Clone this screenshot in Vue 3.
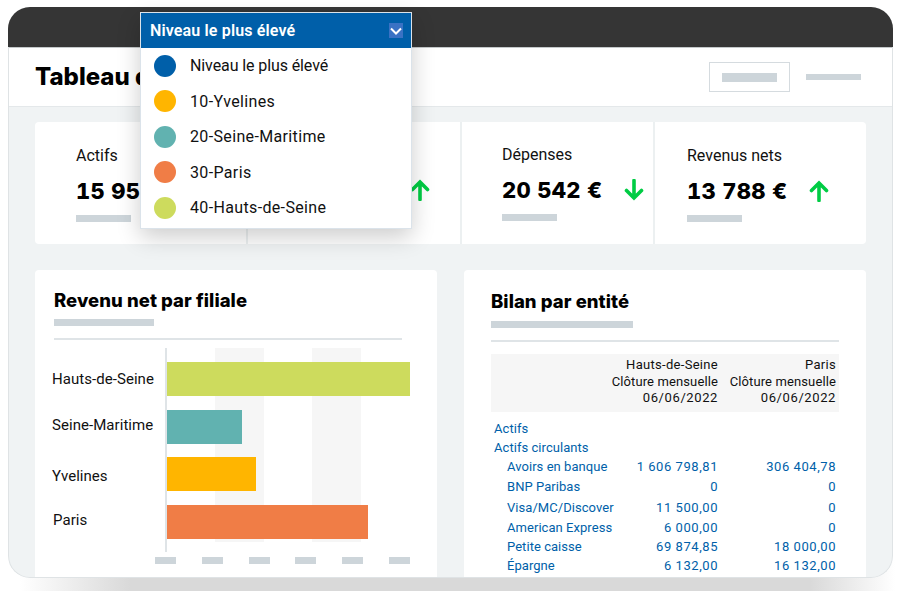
<script setup>
const levels = [
  { name: 'Niveau le plus élevé', color: '#005fa9' },
  { name: '10-Yvelines', color: '#ffb500' },
  { name: '20-Seine-Maritime', color: '#61b2b0' },
  { name: '30-Paris', color: '#f07d46' },
  { name: '40-Hauts-de-Seine', color: '#cddb5d' },
]

const bars = [
  { name: 'Hauts-de-Seine', width: 243, color: '#cddb5d', cls: 'lab-a' },
  { name: 'Seine-Maritime', width: 75, color: '#61b2b0', cls: 'lab-b' },
  { name: 'Yvelines', width: 89, color: '#ffb500', cls: 'lab-c' },
  { name: 'Paris', width: 201, color: '#f07d46', cls: 'lab-d' },
]

const rows = [
  { name: 'Actifs', cls: 'h19' },
  { name: 'Actifs circulants', cls: 'h19' },
  { name: 'Avoirs en banque', a: '1 606 798,81', b: '306 404,78', sub: true, cls: 'h19' },
  { name: 'BNP Paribas', a: '0', b: '0', sub: true, cls: 'h21' },
  { name: 'Visa/MC/Discover', a: '11 500,00', b: '0', sub: true, cls: 'h20' },
  { name: 'American Express', a: '6 000,00', b: '0', sub: true, cls: 'h20' },
  { name: 'Petite caisse', a: '69 874,85', b: '18 000,00', sub: true, cls: 'h19' },
  { name: 'Épargne', a: '6 132,00', b: '16 132,00', sub: true, cls: 'h19' },
]
</script>

<template>
  <div class="page">
    <div class="under-shadow"></div>
    <div class="window">
      <div class="topbar"></div>
      <header class="header">
        <h1 class="page-title">Tableau de bord</h1>
        <div class="header-actions">
          <div class="ghost-btn"><span class="sk sk-btn"></span></div>
          <span class="sk sk-link"></span>
        </div>
      </header>

      <main class="content">
        <section class="kpis">
          <div class="kpi kpi-1">
            <div class="kpi-label">Actifs</div>
            <div class="kpi-value-row"><span class="kpi-value">15 956 €</span></div>
            <span class="sk sk-kpi"></span>
          </div>
          <div class="kpi kpi-2">
            <svg class="arrow" viewBox="0 0 20 22"><path d="M10 20.500V3M2.500 10.500L10 3l7.500 7.500" /></svg>
          </div>
          <div class="kpi kpi-3">
            <div class="kpi-label">Dépenses</div>
            <div class="kpi-value-row">
              <span class="kpi-value">20 542 €</span>
              <svg class="arrow" viewBox="0 0 20 22"><path d="M10 1.500V19M2.500 11.500L10 19l7.500-7.500" /></svg>
            </div>
            <span class="sk sk-kpi"></span>
          </div>
          <div class="kpi kpi-4">
            <div class="kpi-label">Revenus nets</div>
            <div class="kpi-value-row">
              <span class="kpi-value">13 788 €</span>
              <svg class="arrow" viewBox="0 0 20 22"><path d="M10 20.500V3M2.500 10.500L10 3l7.500 7.500" /></svg>
            </div>
            <span class="sk sk-kpi"></span>
          </div>
        </section>

        <section class="cards">
          <div class="card chart-card">
            <h2 class="card-title">Revenu net par filiale</h2>
            <span class="sk sk-sub-a"></span>
            <div class="rule"></div>
            <div class="chart">
              <div class="bands"><span></span><span></span></div>
              <div class="chart-rows">
                <div v-for="b in bars" :key="b.name" class="chart-row">
                  <span class="chart-label" :class="b.cls">{{ b.name }}</span>
                  <span class="bar" :style="{ width: b.width + 'px', background: b.color }"></span>
                </div>
              </div>
            </div>
            <div class="ticks"><span v-for="n in 6" :key="n" class="sk tick"></span></div>
          </div>

          <div class="card table-card">
            <h2 class="card-title">Bilan par entité</h2>
            <span class="sk sk-sub-b"></span>
            <div class="rule"></div>
            <table class="bilan">
              <thead>
                <tr>
                  <th></th>
                  <th>
                    <span class="t-name">Hauts-de-Seine</span><br />
                    <span class="t-close">Clôture mensuelle</span><br />
                    <span class="t-date">06/06/2022</span>
                  </th>
                  <th>
                    <span class="t-name">Paris</span><br />
                    <span class="t-close">Clôture mensuelle</span><br />
                    <span class="t-date">06/06/2022</span>
                  </th>
                </tr>
              </thead>
              <tbody>
                <tr v-for="r in rows" :key="r.name" :class="r.cls">
                  <td class="name" :class="{ sub: r.sub }">{{ r.name }}</td>
                  <td class="num">{{ r.a }}</td>
                  <td class="num">{{ r.b }}</td>
                </tr>
              </tbody>
            </table>
          </div>
        </section>
      </main>
      <div class="window-edge"></div>
    </div>

    <div class="dropdown">
      <div class="dd-head">
        <span>Niveau le plus élevé</span>
        <span class="dd-chevron">
          <svg viewBox="0 0 14 15"><path d="M2 5.500l5 5 5-5" /></svg>
        </span>
      </div>
      <ul class="dd-list">
        <li v-for="l in levels" :key="l.name" class="dd-item">
          <span class="dot" :style="{ background: l.color }"></span>
          {{ l.name }}
        </li>
      </ul>
    </div>
  </div>
</template>

<style>
html, body { margin: 0; background: #fff; }
</style>

<style scoped>
.page {
  position: relative;
  width: 900px;
  height: 591px;
  overflow: hidden;
  background: #fff;
  font-family: Roboto, "Liberation Sans", sans-serif;
  color: #111;
  padding: 7px 7px 0 8px;
  box-sizing: border-box;
}
.under-shadow {
  position: absolute;
  left: 20px;
  right: 5px;
  top: 560px;
  bottom: 0;
  background: linear-gradient(90deg, rgba(217,217,217,0) 0, #d9d9d9 110px, #d9d9d9 790px, rgba(217,217,217,0) 100%);
}
.window {
  position: relative;
  height: 571px;
  border-radius: 22px;
  overflow: hidden;
  background: #f0f3f4;
  display: flex;
  flex-direction: column;
}
/* thin frame drawn over the page area, the dark bar runs edge to edge */
.window-edge {
  position: absolute;
  inset: 40px 0 0;
  border: 1px solid #dfe3e5;
  border-top: 0;
  border-radius: 0 0 22px 22px;
  pointer-events: none;
}
.topbar {
  height: 41px;
  flex: none;
  box-sizing: border-box;
  background: #353535;
  border-bottom: 1px solid #c4c8ca;
}
.header {
  height: 59px;
  flex: none;
  display: flex;
  align-items: center;
  justify-content: space-between;
  background: #fff;
  border-bottom: 1px solid #e4e8ea;
  padding: 0 32px 0 27px;
  box-sizing: border-box;
}
.page-title {
  margin: 0 0 2px;
  font-family: Inter, sans-serif;
  font-size: 24px;
  font-weight: 800;
  color: #000;
}
.header-actions {
  display: flex;
  align-items: center;
  gap: 16px;
}
.ghost-btn {
  width: 81px;
  height: 30px;
  border: 1px solid #d5dbdf;
  box-sizing: border-box;
  display: flex;
  align-items: center;
  justify-content: center;
}
.sk { display: block; background: #cdd5da; }
.sk-btn { width: 55px; height: 9px; }
.sk-link { width: 55px; height: 6px; }

.content {
  padding: 15px 27px 0;
  display: flex;
  flex-direction: column;
  gap: 26px;
}
.kpis {
  height: 122px;
  flex: none;
  display: flex;
  background: #fff;
  border-radius: 4px;
}
.kpi {
  box-sizing: border-box;
  padding: 24px 0 0 41px;
  border-right: 2px solid #ecf0f1;
}
.kpi-1 { width: 213px; }
.kpi-2 { width: 214px; padding: 57px 0 0 162px; }
.kpi-3 { width: 193px; padding: 23px 0 0 40px; }
.kpi-4 { flex: 1; border-right: 0; padding-left: 32px; }
.kpi-label { font-size: 16px; line-height: 20px; }
.kpi-value-row {
  display: flex;
  align-items: center;
  gap: 22px;
  height: 30px;
  margin-top: 10px;
}
.kpi-value {
  font-family: Inter, sans-serif;
  font-size: 22px;
  font-weight: 800;
  font-variant-numeric: tabular-nums;
  letter-spacing: .3px;
  color: #000;
  white-space: nowrap;
}
.arrow {
  width: 20px;
  height: 22px;
  fill: none;
  stroke: #00cc44;
  stroke-width: 3.600;
  stroke-linecap: round;
}
.sk-kpi { width: 55px; height: 7px; margin-top: 9px; }

.cards {
  display: flex;
  gap: 27px;
}
.card {
  width: 402px;
  height: 320px;
  flex: none;
  background: #fff;
  border-radius: 4px;
  box-sizing: border-box;
}
.chart-card { padding: 19px 35px 0 19px; }
.table-card { padding: 20px 27px 0; }
.card-title {
  margin: 0;
  font-family: Inter, sans-serif;
  font-size: 18.500px;
  line-height: 22px;
  font-weight: 800;
  letter-spacing: .05px;
  color: #000;
}
.sk-sub-a { width: 100px; height: 7px; margin-top: 8px; }
.sk-sub-b { width: 142px; height: 7px; margin-top: 9px; }
.rule { height: 2px; background: #dfe4e7; margin-top: 12px; }

.chart {
  position: relative;
  height: 204px;
  margin: 8px 0 0 111px;
  border-left: 2px solid #dfe4e7;
  width: 244px;
}
.bands {
  position: absolute;
  left: 48px;
  top: 0;
  bottom: 10px;
  display: flex;
  gap: 48px;
}
.bands span { width: 49px; background: #f6f6f6; }
.chart-rows {
  position: relative;
  padding-top: 14px;
  display: flex;
  flex-direction: column;
  gap: 13.500px;
}
.chart-row {
  height: 34px;
  display: flex;
  align-items: center;
}
.chart-label {
  width: 115px;
  margin-left: -115px;
  box-sizing: border-box;
  font-size: 15px;
  letter-spacing: .05px;
  white-space: nowrap;
}
.lab-b { margin-top: -4px; }
.lab-c { margin-top: 4px; }
.lab-d { margin-top: -4px; padding-left: 1px; }
.bar { height: 34px; display: block; }
.ticks {
  display: flex;
  justify-content: space-between;
  width: 255px;
  margin: 5px 0 0 101px;
}
.tick { width: 21px; height: 7px; }

.bilan {
  width: 348px;
  table-layout: fixed;
  margin-top: 12px;
  border-collapse: collapse;
  font-size: 13px;
  color: #005fa9;
}
.bilan th {
  height: 58px;
  box-sizing: border-box;
  padding: 0 3px 2px 0;
  background: #f6f6f6;
  color: #111;
  font-weight: 400;
  text-align: right;
  line-height: 16.500px;
  white-space: nowrap;
}
.t-name { letter-spacing: .3px; }
.t-close { letter-spacing: .12px; }
.t-date { letter-spacing: .6px; }
.bilan th:nth-child(2) { width: 120px; }
.bilan th:nth-child(3) { width: 118px; }
.bilan thead::after { content: ""; display: table-row; height: 7px; }
.bilan td {
  padding: 0 3px 0 0;
  white-space: nowrap;
}
.bilan td.num { text-align: right; letter-spacing: .55px; }
.bilan td.name { padding-left: 3px; letter-spacing: .05px; }
.bilan td.sub { padding-left: 16px; }
.h19 { height: 19px; }
.h20 { height: 20px; }
.h21 { height: 21px; }

.dropdown {
  position: absolute;
  left: 140px;
  top: 12px;
  width: 272px;
  height: 217px;
  box-sizing: border-box;
  background: #fff;
  border: 1px solid #dbe3ea;
  box-shadow: 0 8px 22px rgba(0, 0, 0, .2);
}
.dd-head {
  height: 35px;
  background: #005fa9;
  color: #fff;
  font-size: 16px;
  font-weight: 600;
  letter-spacing: .15px;
  display: flex;
  align-items: center;
  justify-content: space-between;
  padding: 0 8px 0 9px;
}
.dd-chevron {
  width: 14px;
  height: 15px;
  background: #3a72c4;
  display: flex;
}
.dd-chevron svg { fill: none; stroke: #fff; stroke-width: 2; }
.dd-list {
  list-style: none;
  margin: 0;
  padding: 0;
}
.dd-item {
  height: 35.500px;
  display: flex;
  align-items: center;
  gap: 14px;
  padding-left: 13px;
  font-size: 16px;
  letter-spacing: .35px;
  color: #111;
}
.dd-item:first-child { letter-spacing: -.1px; }
.dot {
  width: 22px;
  height: 22px;
  border-radius: 50%;
  flex: none;
}
</style>
